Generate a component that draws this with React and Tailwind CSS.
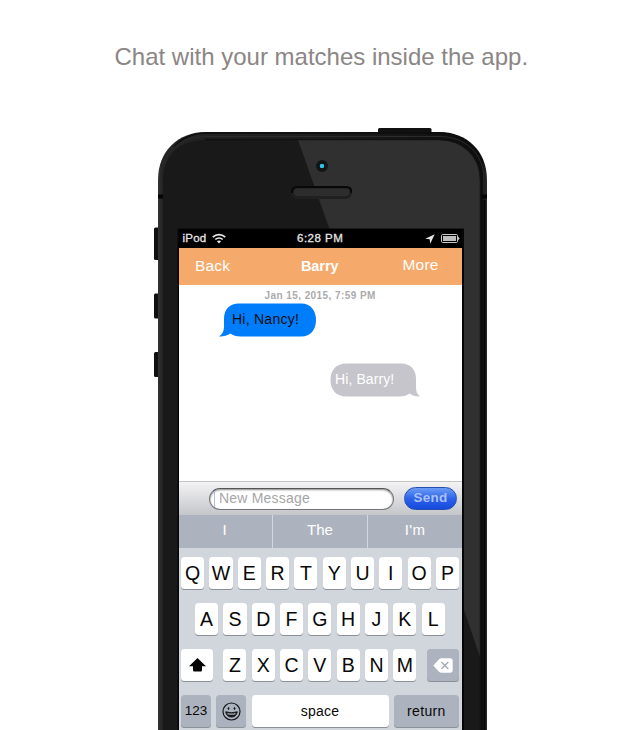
import React from "react";

function PhoneBody() {
  return (
    <svg className="absolute left-0 top-0" width="640" height="730" viewBox="0 0 640 730">
      <defs>
        <linearGradient id="side" x1="0" x2="1">
          <stop offset="0" stopColor="#333" />
          <stop offset=".012" stopColor="#242424" />
          <stop offset=".5" stopColor="#1c1c1c" />
          <stop offset=".985" stopColor="#0e0e0e" />
          <stop offset="1" stopColor="#2a2a2a" />
        </linearGradient>
        <clipPath id="face">
          <path d="M163 730V180C163 156 180 140 204 140H439C463 140 480 156 480 180V730Z" />
        </clipPath>
      </defs>
      <rect x="378" y="128" width="53.5" height="6" rx="1.5" fill="#111" />
      <rect x="154" y="227.500" width="6" height="32.500" rx="1.500" fill="#101010" />
      <rect x="154" y="293.500" width="6" height="25" rx="1.500" fill="#101010" />
      <rect x="154" y="352" width="6" height="25" rx="1.500" fill="#101010" />
      <path d="M158 730V180C158 151 178 132 206 132H439C467 132 487 151 487 180V730Z" fill="url(#side)" />
      <path d="M174 147C183 137 193 133 206 133H439C452 133 463 137 472 147" fill="none" stroke="#0d0d0d" strokeWidth="1.500" />
      <path d="M160.500 196V180C160.500 154 178 136.500 206 136.500H439C466 136.500 484 154 484 180V196" fill="none" stroke="#2b2b2b" strokeWidth="1" />
      <path d="M158 194.500H163V198.500H158ZM481 194.500H487V198.500H481Z" fill="#050505" />
      <g clipPath="url(#face)">
        <rect x="163" y="139" width="318" height="591" fill="#191919" />
        <path d="M298 140H481V660L463 607L329.500 229Z" fill="#303030" />
      </g>
      <path d="M205 139.500H439C463 139.500 480.500 156 480.500 180V730" fill="none" stroke="#111" strokeWidth="1.500" />
      <path d="M484.500 200V730" stroke="#090909" strokeWidth="2" />
      <circle cx="322" cy="166" r="6" fill="#151515" />
      <circle cx="322" cy="166" r="3.300" fill="#080f12" />
      <circle cx="322" cy="166" r="2.300" fill="#31c2ec" />
      <rect x="291" y="186" width="61" height="13" rx="6.500" fill="#202020" />
      <path d="M292 193C291.500 189 294 187 297 187H346C350 187 352 189 351 193" fill="none" stroke="#080808" strokeWidth="2" />
      <rect x="294" y="188.500" width="55.500" height="7.500" rx="3.700" fill="#2d2d2d" />
      <rect x="177.500" y="228.500" width="286.500" height="502" fill="#060608" />
    </svg>
  );
}

function StatusBar() {
  return (
    <div className="relative flex h-[19px] items-center justify-between bg-black pl-[3.500px] pr-[2px] text-[11.500px] font-normal text-[#e6e6e6]">
      <div className="flex items-center gap-[5px]">
        <span className="leading-[19px] tracking-[.25px] [-webkit-text-stroke:.3px_#e6e6e6]">iPod</span>
        <svg width="14" height="11" viewBox="0 0 14 11" fill="none" stroke="#e6e6e6" strokeWidth="1.700">
          <path d="M.8 4.200C4.200.7 9.800.7 13.200 4.200M3.300 6.500C5.400 4.500 8.600 4.500 10.700 6.500" />
          <path d="M4.900 8.300C6 7.100 8 7.100 9.100 8.300L7 10.500Z" fill="#e6e6e6" stroke="none" />
        </svg>
      </div>
      <span className="absolute left-[118px] top-0 whitespace-nowrap leading-[19px] tracking-[.5px] [-webkit-text-stroke:.3px_#e6e6e6]">6:28 PM</span>
      <div className="flex items-center gap-[6px]">
        <svg width="10" height="10" viewBox="0 0 10 10"><path d="M9.700.3L5.200 9.700L4.700 5.300L.3 4.800Z" fill="#e6e6e6" /></svg>
        <svg width="19" height="9" viewBox="0 0 19 9">
          <rect x=".5" y=".5" width="16" height="8" rx="1.200" fill="none" stroke="#c9c9c9" />
          <rect x="2" y="2" width="13" height="5" fill="#bdbdbd" />
          <path d="M17 2.500L18.700 4.500L17 6.500Z" fill="#c9c9c9" />
        </svg>
      </div>
    </div>
  );
}

function Chat() {
  return (
    <div className="h-[196px] bg-white">
      <p className="pl-[85.500px] pt-[4px] text-[10px] font-bold leading-[13px] tracking-[.43px] text-[#ababab]">Jan 15, 2015, 7:59 PM</p>
      <div className="relative ml-[40px] mt-px h-[34px] w-[98px]">
        <svg className="absolute left-0 top-0" width="98" height="34" viewBox="0 0 98 34">
          <path d="M20 .5H82C92 .5 97 8 97 17S92 33.500 82 33.500H22C17 33.500 14 32.500 11.500 30.500C8 32.500 4 33.800 0 33.500C3 31.500 5 28.500 5 24V16C5 6 11 .5 20 .5Z" fill="#007dfa" />
        </svg>
        <span className="relative block pl-[13px] text-[14px] leading-[32px] tracking-[.25px] text-[#0a0d12]">Hi, Nancy!</span>
      </div>
      <div className="relative ml-[151px] mt-[26px] h-[34px] w-[91px]">
        <svg className="absolute left-0 top-0" width="91" height="34" viewBox="0 0 91 34">
          <path d="M17 .5H71C81 .5 86 7 86 16V24C86 28.500 87 31.500 90 33.500C86 33.800 82.500 32.500 79.500 30.500C77 32.500 74 33.500 69 33.500H17C6 33.500.5 27 .5 17S6 .5 17 .5Z" fill="#c6c5cb" />
        </svg>
        <span className="relative block pl-[5px] text-[14px] leading-[33px] tracking-[.1px] text-white">Hi, Barry!</span>
      </div>
    </div>
  );
}

function Key({ children, className = "w-[23.200px] bg-white pt-px text-[19.500px]" }) {
  return (
    <div className={"flex h-[32px] shrink-0 items-center justify-center rounded-[3.500px] text-[#080808] shadow-[0_1px_0_#8c9097] " + className}>
      {children}
    </div>
  );
}

function Letters({ text }) {
  return text.split("").map((c) => <Key key={c}>{c}</Key>);
}

function Keyboard() {
  return (
    <div className="flex h-[182px] flex-col gap-[14px] overflow-hidden bg-[#d1d5dc] pt-[9px]">
      <div className="flex gap-[5.130px] pl-[2px]"><Letters text="QWERTYUIOP" /></div>
      <div className="flex gap-[5.130px] pl-[16px]"><Letters text="ASDFGHJKL" /></div>
      <div className="flex pl-[2px]">
        <Key className="w-[32px] bg-white">
          <svg width="17" height="14" viewBox="0 0 17 14"><path d="M8.500 0L17 8.200H13V12.300Q13 13.500 11.800 13.500H5.200Q4 13.500 4 12.300V8.200H0Z" fill="#050505" /></svg>
        </Key>
        <div className="ml-[10.300px] flex gap-[5.130px]"><Letters text="ZXCVBNM" /></div>
        <Key className="ml-[10.700px] w-[31.900px] bg-[#adb3be]">
          <svg width="20" height="15" viewBox="0 0 20 15">
            <path d="M.3 7.500L6 1.300Q7 .3 8.500.3H17Q19.700.3 19.700 3V12Q19.700 14.700 17 14.700H8.500Q7 14.700 6 13.700Z" fill="#fff" />
            <path d="M8.500 4L15.300 11M15.300 4L8.500 11" stroke="#a3a9b4" strokeWidth="1.300" />
          </svg>
        </Key>
      </div>
      <div className="flex pl-[2px]">
        <Key className="w-[30px] bg-[#adb3be] pt-px text-[13.500px]">123</Key>
        <Key className="ml-[5.300px] w-[30px] bg-[#adb3be]">
          <svg width="19" height="19" viewBox="0 0 19 19" fill="none" stroke="#15171a">
            <circle cx="9.500" cy="9.500" r="8.500" strokeWidth="1.200" />
            <ellipse cx="6.500" cy="6.500" rx=".5" ry="1" fill="#15171a" />
            <ellipse cx="12.500" cy="6.500" rx=".5" ry="1" fill="#15171a" />
            <path d="M3.700 9.800Q9.500 11.800 15.300 9.800Q14.200 15 9.500 15T3.700 9.800Z" fill="#15171a" />
            <path d="M5.500 11.600Q9.500 12.700 13.500 11.600" stroke="#adb3be" strokeWidth="1.300" />
          </svg>
        </Key>
        <Key className="ml-[5.300px] w-[137px] bg-white text-[14px] tracking-[.25px]">space</Key>
        <Key className="ml-[5.300px] w-[65px] bg-[#adb3be] text-[14px] tracking-[.35px]">return</Key>
      </div>
    </div>
  );
}

export default function App() {
  return (
    <main className="relative h-[730px] w-[640px] overflow-hidden bg-white font-['Liberation_Sans',Arial,sans-serif]">
      <PhoneBody />
      <div className="relative flex h-full flex-col">
        <h1 className="h-[229px] whitespace-nowrap pl-[114.500px] pt-[42px] text-[24px] leading-[30px] text-[#8b8685]">Chat with your matches inside the app.</h1>
        <section className="ml-[179px] w-[283px]">
          <StatusBar />
          <header className="flex h-[37px] items-center bg-[#f5aa6b] pb-[2px] text-[15.500px] leading-[34px] text-white">
            <span className="w-[122px] pl-[16px] tracking-[.2px]">Back</span>
            <b className="w-[101.500px] text-[14.500px] tracking-[-.1px]">Barry</b>
            <span className="pb-px tracking-[.2px]">More</span>
          </header>
          <Chat />
          <div className="flex h-[34px] items-center border-t border-[#c4c4c6] bg-linear-to-b from-[#f3f3f4] to-[#c5c6ca] pl-[30px]">
            <div className="flex h-[22px] w-[185px] items-center rounded-full border border-[#77777b] border-t-[#555] bg-white pl-[4px] text-[14px] text-[#a6a6a6] shadow-[inset_0_1px_2px_#888]">
              <span className="mr-[4px] h-[16px] w-px bg-[#b3bdf3]" />
              <span className="tracking-[.2px]">New Message</span>
            </div>
            <div className="ml-[10px] flex h-[23px] w-[53px] items-center justify-center rounded-full border border-[#244fae] bg-linear-to-b from-[#6d9cf5] via-[#2e62e9] to-[#154add] text-[13.500px] font-bold tracking-[.2px] text-[#a8c0f6]">Send</div>
          </div>
          <div className="flex h-[33px] divide-x divide-[#d4d7dd] bg-[#adb3be] text-[15px] leading-[30px] text-white">
            <span className="w-[94px] pr-[2px] text-center">I</span>
            <span className="w-[95px] text-center">The</span>
            <span className="flex-1 text-center tracking-[.3px]">I'm</span>
          </div>
          <Keyboard />
        </section>
      </div>
    </main>
  );
}
